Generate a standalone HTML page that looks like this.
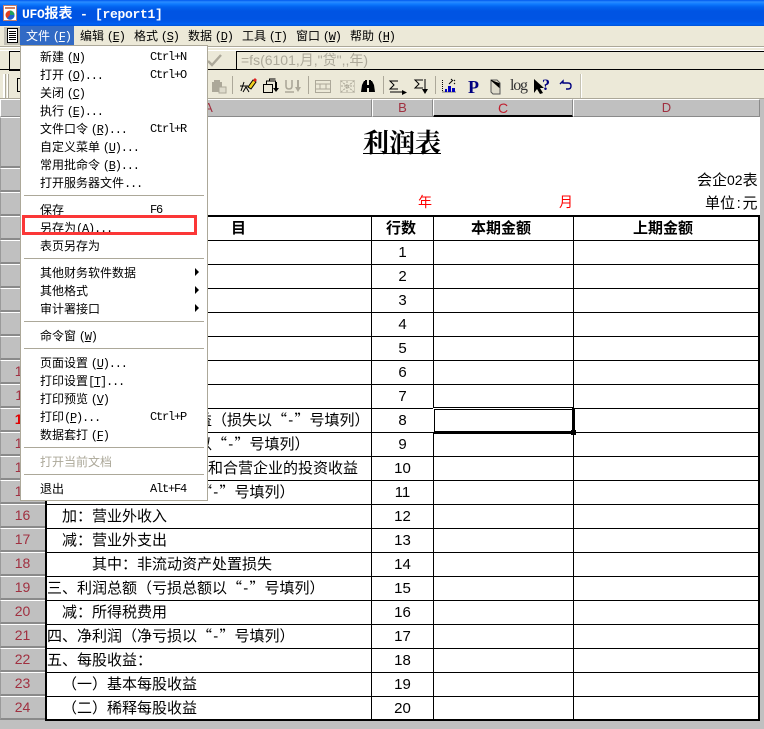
<!DOCTYPE html>
<html lang="zh-CN"><head><meta charset="utf-8"><title>UFO报表</title>
<style>
html,body{margin:0;padding:0;width:764px;height:729px;overflow:hidden;background:#c0c0c0}
body{position:relative;font-family:"WenQuanYi Zen Hei","Noto Sans CJK SC","Liberation Sans",sans-serif;font-size:12px;color:#000}
div,span,svg{position:absolute;display:block}
i,b.n,u{position:static;display:inline;font-style:normal}
.t{white-space:nowrap;line-height:16px}
.m{font-family:"Liberation Mono",monospace;font-size:12px;letter-spacing:-1.2px}
.bar{left:0;width:764px;background:#ece9d8}
.mi{white-space:nowrap;line-height:16px;color:#000}
.mb{top:27px;line-height:17px;white-space:nowrap;color:#000}
.mt{left:40px;white-space:nowrap;line-height:18px;height:18px}
.sc{left:150px;font-family:"Liberation Mono",monospace;font-size:12px;letter-spacing:-1.2px;line-height:18px;height:18px;white-space:nowrap}
.sep{left:24px;width:180px;height:1px;background:#aca899}
.ar{left:195px;width:0;height:0;border-left:4px solid #000;border-top:4px solid transparent;border-bottom:4px solid transparent}
.hl{background:#000;left:46px;width:713px;height:1px}
.vl{background:#000;width:1px;top:216px;height:504px}
.c{white-space:nowrap;font-size:15px;line-height:24px;height:24px;color:#000}
.num{left:372px;width:61px;text-align:center;font-family:"Liberation Sans",sans-serif;font-size:15px;line-height:26px;height:24px}
.rh{left:0;width:45px;background:#c0c0c0;border-top:1px solid #fff;border-left:1px solid #9a9a9a;box-sizing:border-box;border-bottom:2px solid #8a8a8a;text-align:center;font-family:"Liberation Sans",sans-serif;font-size:14px;color:#a03040;line-height:20px;padding-right:1px}
.ch{top:99px;height:18px;background:#c0c0c0;border-top:1px solid #fff;border-left:1px solid #fff;border-right:1px solid #8a8a8a;border-bottom:1px solid #8a8a8a;box-sizing:border-box;text-align:center;font-family:"Liberation Sans",sans-serif;font-size:13px;line-height:16px;color:#a03040}
.hd{font-weight:bold;font-size:15px;line-height:24px;white-space:nowrap;top:216px}
.q{display:inline-block;position:static;width:15px;text-align:center;font-family:"Noto Sans CJK SC",sans-serif}
.d{display:inline-block;position:static;width:7.5px;text-align:center;font-family:"Liberation Sans",sans-serif}
</style></head><body>

<div style="left:0;top:0;width:764px;height:26px;background:linear-gradient(#0058ee 0,#2a8cff 2px,#0f7bff 4px,#0262ee 7px,#0054e3 11px,#0054e3 19px,#0058eb 22px,#0062f5 24px,#0052d6 26px)"></div>
<svg style="left:3px;top:5px" width="15" height="17" viewBox="0 0 15 17"><rect x=".5" y=".5" width="13" height="15" fill="#fff" stroke="#c08070"/><rect x="2" y="2" width="10" height="2" fill="#d08060"/><circle cx="7" cy="10" r="4.5" fill="#e04020"/><path d="M7 10V5.5A4.5 4.5 0 0 1 11.5 10z" fill="#20a060"/><path d="M7 10h4.5A4.5 4.5 0 0 1 4 13.5z" fill="#2060d0"/></svg>
<div class="t" style="left:22px;top:5px;color:#fff;font-weight:bold;font-size:14px;line-height:16px"><i style="font-family:'Liberation Mono',monospace;font-size:13px;letter-spacing:-.3px">UFO</i>报表<i style="font-family:'Liberation Mono',monospace;font-size:13px;letter-spacing:-.3px"> - [report1]</i></div>

<div class="bar" style="top:26px;height:72px"></div>
<div style="left:4px;top:27px;width:16px;height:18px;background:#c1bfb5"></div>
<svg style="left:7px;top:28px" width="12" height="15" viewBox="0 0 12 15"><path d="M.5.5h10v14H.5z" fill="#fff" stroke="#000"/><path d="M2 3h7v1H2zM2 5h7v1H2zM2 7h7v1H2zM2 9h7v1H2zM2 11h7v1H2z" fill="#000"/></svg>
<div style="left:20px;top:26px;width:54px;height:19px;background:#316ac5"></div>
<div class="mb" style="left:26px;color:#fff">文件 <i class="m">(<u>F</u>)</i></div>
<div class="mb" style="left:80px">编辑 <i class="m">(<u>E</u>)</i></div>
<div class="mb" style="left:134px">格式 <i class="m">(<u>S</u>)</i></div>
<div class="mb" style="left:188px">数据 <i class="m">(<u>D</u>)</i></div>
<div class="mb" style="left:242px">工具 <i class="m">(<u>T</u>)</i></div>
<div class="mb" style="left:296px">窗口 <i class="m">(<u>W</u>)</i></div>
<div class="mb" style="left:350px">帮助 <i class="m">(<u>H</u>)</i></div>

<div style="left:0;top:46px;width:764px;height:1px;background:#aca899"></div>
<div style="left:0;top:47px;width:764px;height:1px;background:#fff"></div>
<div style="left:0;top:50px;width:764px;height:1px;background:#fff"></div>
<div style="left:0;top:69px;width:764px;height:1px;background:#000"></div>
<div style="left:9px;top:51px;width:14px;height:18px;border-left:1px solid #000;border-top:1px solid #000;border-bottom:1px solid #000"></div>
<svg style="left:206px;top:53px" width="17" height="14" viewBox="0 0 17 14"><path d="M2 8l4 4 9-10" fill="none" stroke="#aca899" stroke-width="2.4"/></svg>
<div style="left:236px;top:51px;width:528px;height:18px;border-left:1px solid #000;border-top:1px solid #000"></div>
<div class="t" style="left:241px;top:51px;color:#aca899;font-family:'Liberation Sans','Noto Sans CJK SC',sans-serif;font-size:14px;line-height:18px">=fs(6101,月,"贷",,年)</div>

<div style="left:3px;top:74px;width:2px;height:24px;background:#fff;border-right:1px solid #aca899"></div>
<div style="left:7px;top:74px;width:1px;height:24px;background:#fff;border-right:1px solid #aca899"></div>
<div style="left:17px;top:78px;width:4px;height:12px;border-left:1px solid #000;border-top:1px solid #000;border-bottom:1px solid #000"></div>

<svg style="left:210px;top:76px" width="375" height="20" viewBox="210 76 375 20">
<g fill="#aca899"><path d="M212 82h2v-2h6v2h2v5h-3v5h-7z"/><path d="M219 87h7v6h-7z" fill="#dedbcc" stroke="#aca899"/></g>
<path d="M232.500 76v18" stroke="#aca899"/>
<path d="M240 86h8M244 82l-3 9M249 92l-3-5-3 5" stroke="#000" fill="none"/><path d="M248 87l5-7 3 2-5 7z" fill="#f0d020" stroke="#000"/><path d="M253 80l2-2 2 2-2 2z" fill="#e02020"/>
<path d="M263.500 84.500h9v8h-9zM266.500 84v-3h9v3M269.500 81v-2h6" fill="none" stroke="#000"/><path d="M276 82v7" stroke="#000" stroke-width="2"/><path d="M273 88h6l-3 4z" fill="#000"/>
<path d="M286 80v6q0 3 3 3t3-3v-6M285 92h9" fill="none" stroke="#aca899" stroke-width="1.6"/><path d="M298 80v8" stroke="#aca899" stroke-width="2"/><path d="M295 87h6l-3 5z" fill="#aca899"/>
<path d="M308.500 76v18" stroke="#aca899"/>
<path d="M315.500 80.500h15v12h-15zM315 84h16M315 89h16M320 84v5M326 84v5" fill="none" stroke="#aca899"/>
<path d="M340.500 80.500h14v12h-14z" fill="none" stroke="#aca899" stroke-dasharray="1 1"/><path d="M341 81l13 11M354 81l-13 11M347 81v11M341 86h13" stroke="#aca899" stroke-dasharray="2 1"/>
<path d="M361 92l1-7 2-4h1v-1h2v5h2v-5h2v1h1l2 4 1 7h-6v-4h-2v4z" fill="#000"/>
<path d="M383.500 76v18" stroke="#aca899"/>
<path d="M398 81h-8l4 4-4 4h8M390 92h12" fill="none" stroke="#000"/><path d="M402 90v5l5-2.500z" fill="#000"/>
<path d="M423 80h-8l4 4-4 4h8" fill="none" stroke="#000"/><path d="M425 79v10" stroke="#000"/><path d="M422 89h6l-3 5z" fill="#000"/>
<path d="M435.500 76v18" stroke="#aca899"/>
<path d="M442.500 80v12h13" fill="none" stroke="#000" stroke-dasharray="1 1"/><path d="M445 89h2v3h-2zM448 86h3v6h-3zM452 88h3v4h-3z" fill="#0000c0"/><path d="M449 84l4-4M451 79l1 1M454 80l1 1M454 83l1 1" stroke="#000"/>
<path d="M491 80h6l3 3v11h-7l-2-2z" fill="#dedbcc" stroke="#555"/><path d="M491 80l8 7v-4" fill="#000" stroke="#000"/>
<path d="M534 79v14l3-4 3 5 3-1-3-5h4z" fill="#000"/>
<path d="M560 84l3-3v2h5q3 0 3 3t-3 3h-2" fill="none" stroke="#000080" stroke-width="1.400"/>
</svg>
<div class="t" style="left:468px;top:78px;font-family:'Liberation Serif',serif;font-weight:bold;font-size:18px;line-height:18px;color:#000080">P</div>
<div class="t" style="left:510px;top:76px;font-family:'Liberation Serif',serif;font-size:16px;line-height:20px;color:#333;letter-spacing:-1.2px">log</div>
<div class="t" style="left:542px;top:77px;font-family:'Liberation Serif',serif;font-weight:bold;font-size:16px;line-height:18px;color:#000080">?</div>
<div style="left:580px;top:74px;width:1px;height:24px;background:#c5c2b2;border-right:1px solid #fff"></div>
<div style="left:0;top:98px;width:764px;height:1px;background:#aca899"></div>

<div style="left:46px;top:117px;width:714px;height:604px;background:#fff"></div>
<div style="left:0;top:99px;width:45px;height:18px;background:#c0c0c0;border-top:1px solid #fff;border-left:1px solid #fff;box-sizing:border-box;border-bottom:1px solid #8a8a8a"></div>
<div class="ch" style="left:45px;width:327px;text-align:center">A</div>
<div class="ch" style="left:372px;width:61px">B</div>
<div class="ch" style="left:433px;width:140px;border-bottom:2px solid #000;color:#c02030;font-size:14px">C</div>
<div class="ch" style="left:573px;width:187px">D</div>

<div class="rh" style="top:117px;height:51px"></div>
<div class="rh" style="top:168px;height:24px"></div>
<div class="rh" style="top:192px;height:24px"></div>
<div class="rh" style="top:216px;height:24px"></div>
<div class="rh" style="top:240px;height:24px"></div>
<div class="rh" style="top:264px;height:24px"></div>
<div class="rh" style="top:288px;height:24px"></div>
<div class="rh" style="top:312px;height:24px"></div>
<div class="rh" style="top:336px;height:24px"></div>
<div class="rh" style="top:360px;height:24px">10</div>
<div class="rh" style="top:384px;height:24px">11</div>
<div class="rh" style="top:408px;height:24px;color:#e00000;font-weight:bold">12</div>
<div class="rh" style="top:432px;height:24px">13</div>
<div class="rh" style="top:456px;height:24px">14</div>
<div class="rh" style="top:480px;height:24px">15</div>
<div class="rh" style="top:504px;height:24px">16</div>
<div class="rh" style="top:528px;height:24px">17</div>
<div class="rh" style="top:552px;height:24px">18</div>
<div class="rh" style="top:576px;height:24px">19</div>
<div class="rh" style="top:600px;height:24px">20</div>
<div class="rh" style="top:624px;height:24px">21</div>
<div class="rh" style="top:648px;height:24px">22</div>
<div class="rh" style="top:672px;height:24px">23</div>
<div class="rh" style="top:696px;height:24px">24</div>

<div class="t" style="left:363px;top:126px;font-family:'Noto Serif CJK SC',serif;font-weight:bold;font-size:26px;line-height:32px;border-bottom:1px solid #000;height:27px;overflow:visible">利润表</div>
<div class="t" style="left:697px;top:172px;font-size:15px"><i>会企</i><i style="font-family:'Liberation Sans',sans-serif;font-size:14px">02</i><i>表</i></div>
<div class="t" style="left:705px;top:195px;font-size:15px">单位<i class="d">:</i>元</div>
<div class="t" style="left:418px;top:194px;font-size:14px;color:#f00">年</div>
<div class="t" style="left:559px;top:194px;font-size:14px;color:#f00">月</div>

<div style="left:46px;top:215px;width:714px;height:2px;background:#000"></div>
<div class="hl" style="top:240px"></div><div class="hl" style="top:264px"></div><div class="hl" style="top:288px"></div><div class="hl" style="top:312px"></div><div class="hl" style="top:336px"></div><div class="hl" style="top:360px"></div><div class="hl" style="top:384px"></div><div class="hl" style="top:408px"></div><div class="hl" style="top:432px"></div><div class="hl" style="top:456px"></div><div class="hl" style="top:480px"></div><div class="hl" style="top:504px"></div><div class="hl" style="top:528px"></div><div class="hl" style="top:552px"></div><div class="hl" style="top:576px"></div><div class="hl" style="top:600px"></div><div class="hl" style="top:624px"></div><div class="hl" style="top:648px"></div><div class="hl" style="top:672px"></div><div class="hl" style="top:696px"></div>
<div class="vl" style="left:371px"></div><div class="vl" style="left:433px"></div><div class="vl" style="left:573px"></div>
<div style="left:45px;top:215px;width:2px;height:506px;background:#000"></div>
<div style="left:758px;top:215px;width:2px;height:506px;background:#000"></div>
<div style="left:45px;top:719px;width:715px;height:2px;background:#000"></div>

<div class="hd" style="left:231px">目</div>
<div class="hd" style="left:386px">行数</div>
<div class="hd" style="left:471px">本期金额</div>
<div class="hd" style="left:633px">上期金额</div>

<div class="num" style="top:240px">1</div><div class="num" style="top:264px">2</div><div class="num" style="top:288px">3</div><div class="num" style="top:312px">4</div><div class="num" style="top:336px">5</div><div class="num" style="top:360px">6</div><div class="num" style="top:384px">7</div><div class="num" style="top:408px">8</div><div class="num" style="top:432px">9</div><div class="num" style="top:456px">10</div><div class="num" style="top:480px">11</div><div class="num" style="top:504px">12</div><div class="num" style="top:528px">13</div><div class="num" style="top:552px">14</div><div class="num" style="top:576px">15</div><div class="num" style="top:600px">16</div><div class="num" style="top:624px">17</div><div class="num" style="top:648px">18</div><div class="num" style="top:672px">19</div><div class="num" style="top:696px">20</div>

<div class="c" style="left:62px;top:408px">加：公允价值变动收益（损失以<i class="q">“</i><i class="d">-</i><i class="q">”</i>号填列）</div>
<div class="c" style="left:92px;top:432px">投资收益（损失以<i class="q">“</i><i class="d">-</i><i class="q">”</i>号填列）</div>
<div class="c" style="left:88px;top:456px">其中：对联营企业和合营企业的投资收益</div>
<div class="c" style="left:47px;top:480px">二、营业利润（亏损以<i class="q">“</i><i class="d">-</i><i class="q">”</i>号填列）</div>
<div class="c" style="left:62px;top:504px">加：营业外收入</div>
<div class="c" style="left:62px;top:528px">减：营业外支出</div>
<div class="c" style="left:92px;top:552px">其中：非流动资产处置损失</div>
<div class="c" style="left:47px;top:576px">三、利润总额（亏损总额以<i class="q">“</i><i class="d">-</i><i class="q">”</i>号填列）</div>
<div class="c" style="left:62px;top:600px">减：所得税费用</div>
<div class="c" style="left:47px;top:624px">四、净利润（净亏损以<i class="q">“</i><i class="d">-</i><i class="q">”</i>号填列）</div>
<div class="c" style="left:47px;top:648px">五、每股收益：</div>
<div class="c" style="left:62px;top:672px">（一）基本每股收益</div>
<div class="c" style="left:62px;top:696px">（二）稀释每股收益</div>

<div style="left:433px;top:407px;width:140px;height:2px;background:#fff;border-top:1px solid #000;box-sizing:border-box"></div>
<div style="left:433px;top:408px;width:1px;height:24px;background:#fff"></div>
<div style="left:434px;top:409px;width:1px;height:22px;background:#000"></div>
<div style="left:434px;top:409px;width:138px;height:1px;background:#000"></div>
<div style="left:572px;top:408px;width:3px;height:24px;background:#000"></div>
<div style="left:434px;top:431px;width:139px;height:3px;background:#000"></div>
<div style="left:571px;top:430px;width:5px;height:5px;background:#000"></div>

<div style="left:20px;top:45px;width:188px;height:456px;background:#fff;border:1px solid #aca899;box-sizing:border-box"></div>
<div class="mt" style="top:48px">新建 <i class="m">(<u>N</u>)</i></div><div class="sc" style="top:48px">Ctrl+N</div>
<div class="mt" style="top:66px">打开 <i class="m">(<u>O</u>)...</i></div><div class="sc" style="top:66px">Ctrl+O</div>
<div class="mt" style="top:84px">关闭 <i class="m">(<u>C</u>)</i></div>
<div class="mt" style="top:102px">执行 <i class="m">(<u>E</u>)...</i></div>
<div class="mt" style="top:120px">文件口令 <i class="m">(<u>R</u>)...</i></div><div class="sc" style="top:120px">Ctrl+R</div>
<div class="mt" style="top:138px">自定义菜单 <i class="m">(<u>U</u>)...</i></div>
<div class="mt" style="top:156px">常用批命令 <i class="m">(<u>B</u>)...</i></div>
<div class="mt" style="top:174px">打开服务器文件<i class="m">...</i></div>
<div class="sep" style="top:195px"></div>
<div class="mt" style="top:201px">保存</div><div class="sc" style="top:201px">F6</div>
<div class="mt" style="top:219px">另存为<i class="m">(A)...</i></div>
<div class="mt" style="top:237px">表页另存为</div>
<div class="sep" style="top:258px"></div>
<div class="mt" style="top:264px">其他财务软件数据</div><div class="ar" style="top:268px"></div>
<div class="mt" style="top:282px">其他格式</div><div class="ar" style="top:286px"></div>
<div class="mt" style="top:300px">审计署接口</div><div class="ar" style="top:304px"></div>
<div class="sep" style="top:321px"></div>
<div class="mt" style="top:327px">命令窗 <i class="m">(<u>W</u>)</i></div>
<div class="sep" style="top:348px"></div>
<div class="mt" style="top:354px">页面设置 <i class="m">(<u>U</u>)...</i></div>
<div class="mt" style="top:372px">打印设置<i class="m">[<u>T</u>]...</i></div>
<div class="mt" style="top:390px">打印预览 <i class="m">(<u>V</u>)</i></div>
<div class="mt" style="top:408px">打印<i class="m">(<u>P</u>)...</i></div><div class="sc" style="top:408px">Ctrl+P</div>
<div class="mt" style="top:426px">数据套打 <i class="m">(<u>F</u>)</i></div>
<div class="sep" style="top:447px"></div>
<div class="mt" style="top:453px;color:#aca899">打开当前文档</div>
<div class="sep" style="top:474px"></div>
<div class="mt" style="top:480px">退出</div><div class="sc" style="top:480px">Alt+F4</div>

<div style="left:22px;top:215px;width:175px;height:20px;border:3px solid #fb3737;box-sizing:border-box"></div>
</body></html>
